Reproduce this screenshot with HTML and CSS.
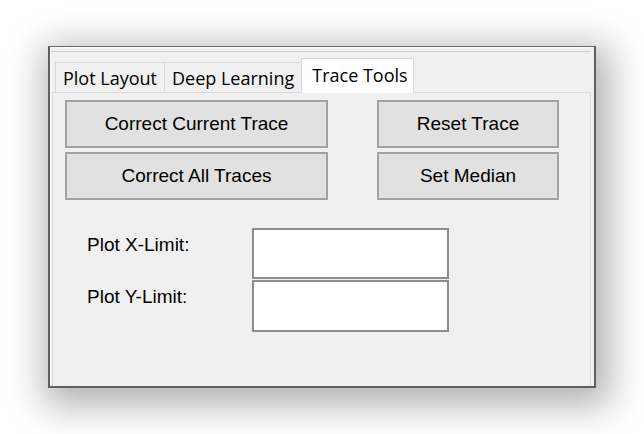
FILE: index.html
```html
<!DOCTYPE html>
<html>
<head>
<meta charset="utf-8">
<link rel="stylesheet" href="styles.css">
</head>
<body>
<div class="shadow">
  <div class="window">
    <div class="edge"></div>
    <div class="notebook">
      <div class="tabs">
        <div class="tab">Plot Layout</div>
        <div class="tab">Deep Learning</div>
        <div class="tab selected">Trace Tools</div>
      </div>
      <div class="pane">
        <div class="buttons">
          <button class="btn">Correct Current Trace</button>
          <button class="btn">Reset Trace</button>
          <button class="btn">Correct All Traces</button>
          <button class="btn">Set Median</button>
        </div>
        <div class="form">
          <label class="lbl">Plot X-Limit:</label>
          <input class="field" type="text">
          <label class="lbl">Plot Y-Limit:</label>
          <input class="field last" type="text">
        </div>
      </div>
    </div>
  </div>
</div>
</body>
</html>
```

FILE: styles.css
```css
html, body {
  margin: 0;
  padding: 0;
  background: #ffffff;
}

body {
  box-sizing: border-box;
  min-height: 434px;
  padding: 46px 0 0 48px;
  overflow: hidden;
}

.shadow {
  position: relative;
  width: 548px;
  height: 342px;
}

.shadow::before {
  content: "";
  position: absolute;
  left: -4px;
  top: 0;
  right: -14px;
  bottom: -18px;
  background: rgba(0, 0, 0, 0.30);
  filter: blur(18px);
  z-index: 0;
}

.window {
  position: relative;
  z-index: 1;
  box-sizing: border-box;
  width: 548px;
  height: 342px;
  background: #f0f0f0;
  border: 2px solid #5f5f5f;
  border-top: 1px solid #6a6a6a;
  box-shadow: inset 1px 0 0 #ffffff;
  display: flex;
  flex-direction: column;
}

.edge {
  height: 3px;
  margin-left: 1px;
  margin-right: 3px;
  border-top: 1px solid #fafafa;
  border-bottom: 1px solid #cdcdcd;
  flex: none;
}

.notebook {
  margin: 6px 0 0 2px;
  width: 539px;
  flex: 1;
  display: flex;
  flex-direction: column;
}

.tabs {
  display: flex;
  align-items: flex-end;
  height: 34px;
  padding-left: 3px;
  flex: none;
}

.tab {
  box-sizing: border-box;
  height: 30px;
  padding: 3px 7px 0 7px;
  border: 1px solid #d9d9d9;
  border-bottom: none;
  margin-left: -1px;
  font-family: "Open Sans", "Noto Sans", sans-serif;
  font-size: 18px;
  line-height: 24px;
  color: #000;
  background: #f0f0f0;
}

.tab:first-child {
  margin-left: 0;
}

.tab.selected {
  height: 35px;
  padding: 4px 5px 0 10px;
  margin-bottom: -1px;
  background: #ffffff;
  position: relative;
  z-index: 1;
}

.pane {
  flex: 1;
  border: 1px solid #d9d9d9;
  border-bottom: none;
  background: #f0f0f0;
  padding: 7px 0 0 12px;
}

.buttons {
  display: grid;
  grid-template-columns: 263px 182px;
  grid-auto-rows: 48px;
  column-gap: 49px;
  row-gap: 4px;
}

.btn {
  box-sizing: border-box;
  margin: 0;
  padding: 0;
  background: #e1e1e1;
  border: 2px solid #a2a2a2;
  font-family: "Liberation Sans", Arial, sans-serif;
  font-size: 19px;
  color: #000;
}

.form {
  display: grid;
  grid-template-columns: 165px 197px;
  grid-auto-rows: 51px;
  row-gap: 1px;
  margin: 28px 0 0 22px;
}

.lbl {
  font-family: "Liberation Sans", Arial, sans-serif;
  font-size: 19px;
  line-height: 22px;
  padding-top: 6px;
  color: #000;
}

.field {
  box-sizing: border-box;
  margin: 0;
  width: 197px;
  height: 51px;
  background: #ffffff;
  border: 2px solid #8d8d8d;
}

.field.last {
  height: 52px;
}
```
